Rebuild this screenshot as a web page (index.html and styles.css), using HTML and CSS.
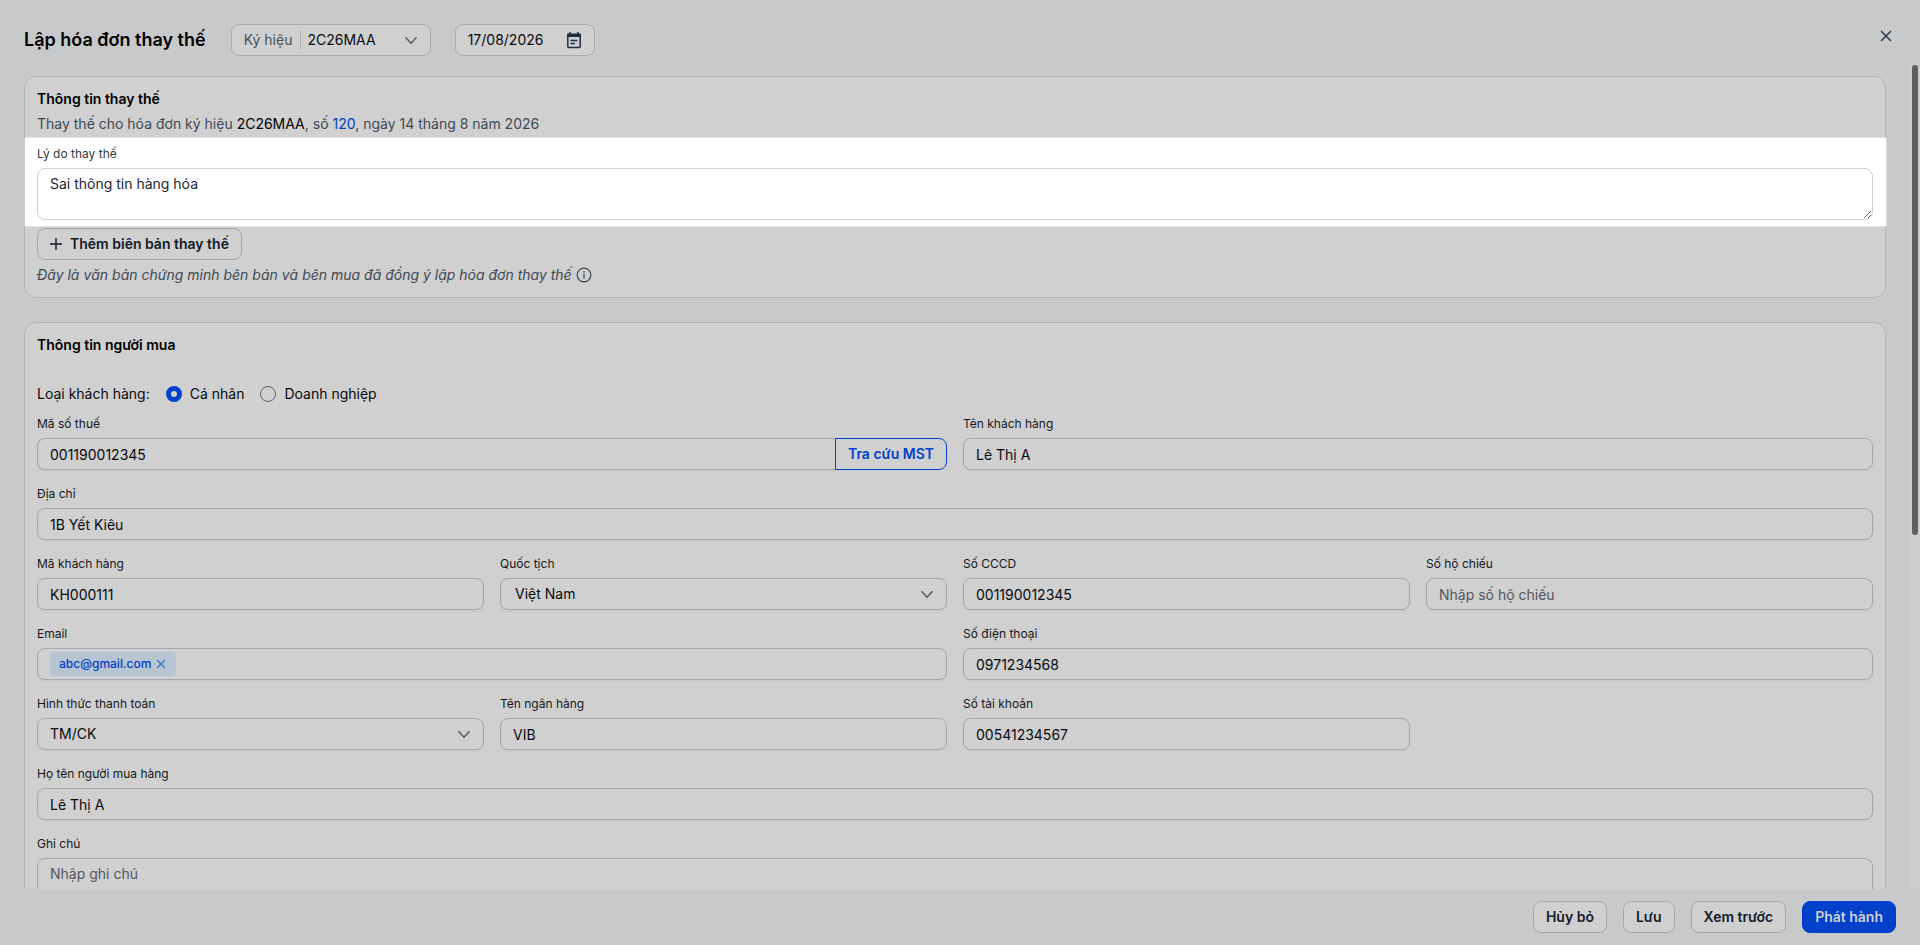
FILE: index.html
```html
<!DOCTYPE html>
<html lang="vi">
<head>
    <meta charset="UTF-8">
    <meta name="viewport" content="width=device-width, initial-scale=1.0">
    <title>Lập hóa đơn thay thế</title>
    <link rel="stylesheet" href="styles.css">
</head>
<body>
    <div class="modal">
        <header class="header">
            <h1>Lập hóa đơn thay thế</h1>
            <div class="symbol">
                <label for="symbol">Ký hiệu</label>
                <select id="symbol">
                    <option>2C26MAA</option>
                </select>
                <svg class="arrow" viewBox="0 0 14 14"><path d="M1.500 4.200l5.500 6 5.500-6"/></svg>
            </div>
            <div class="date">
                <input type="text" value="17/08/2026" aria-label="Ngày hóa đơn">
                <svg class="calendar" viewBox="0 0 16 18">
                    <path d="M1.800 4v11.400a1 1 0 0 0 1 1h10.400a1 1 0 0 0 1-1V4" stroke="currentColor" stroke-width="1.500"/>
                    <path d="M1 3.500a1 1 0 0 1 1-1h12a1 1 0 0 1 1 1V6H1zM3.200 1h1.600v2H3.200zM11.200 1h1.600v2h-1.600z" fill="currentColor"/>
                    <path d="M4.500 9.500h7M4.500 12.500h4.500" stroke="currentColor" stroke-width="1.500"/>
                </svg>
            </div>
            <button class="close" type="button" aria-label="Đóng">
                <svg viewBox="0 0 12 12"><path d="M1 1l10 10M11 1L1 11"/></svg>
            </button>
        </header>

        <div class="main">
            <div class="content">
                <section class="card card-replace">
                    <h2>Thông tin thay thế</h2>
                    <p class="desc">Thay thế cho hóa đơn ký hiệu <b>2C26MAA</b>, số <a href="#">120</a>, ngày 14 tháng 8 năm 2026</p>
                    <div class="reason">
                        <label for="reason">Lý do thay thế</label>
                        <textarea id="reason">Sai thông tin hàng hóa</textarea>
                    </div>
                    <button class="btn btn-add" type="button">
                        <svg viewBox="0 0 12 12"><path d="M6 0v12M0 6h12"/></svg>
                        Thêm biên bản thay thế
                    </button>
                    <p class="note">
                        Đây là văn bản chứng minh bên bán và bên mua đã đồng ý lập hóa đơn thay thế
                        <svg viewBox="0 0 14 14"><circle cx="7" cy="7" r="6"/><path d="M7 6v4M7 3.500v1.500"/></svg>
                    </p>
                </section>

                <section class="card card-buyer">
                    <h2>Thông tin người mua</h2>
                    <div class="type">
                        <span>Loại khách hàng:</span>
                        <label><input type="radio" name="type" checked>Cá nhân</label>
                        <label><input type="radio" name="type">Doanh nghiệp</label>
                    </div>
                    <div class="form">
                        <div class="field w-2">
                            <label for="tax">Mã số thuế</label>
                            <div class="group">
                                <input class="input" id="tax" type="text" value="001190012345">
                                <button class="btn btn-search" type="button">Tra cứu MST</button>
                            </div>
                        </div>
                        <div class="field w-2">
                            <label for="name">Tên khách hàng</label>
                            <input class="input" id="name" type="text" value="Lê Thị A">
                        </div>
                        <div class="field w-4">
                            <label for="address">Địa chỉ</label>
                            <input class="input" id="address" type="text" value="1B Yết Kiêu">
                        </div>
                        <div class="field">
                            <label for="code">Mã khách hàng</label>
                            <input class="input" id="code" type="text" value="KH000111">
                        </div>
                        <div class="field">
                            <label for="country">Quốc tịch</label>
                            <div class="select">
                                <select class="input country" id="country">
                                    <option>Việt Nam</option>
                                </select>
                                <svg class="arrow" viewBox="0 0 14 14"><path d="M1.500 4.200l5.500 6 5.500-6"/></svg>
                            </div>
                        </div>
                        <div class="field">
                            <label for="cccd">Số CCCD</label>
                            <input class="input" id="cccd" type="text" value="001190012345">
                        </div>
                        <div class="field">
                            <label for="passport">Số hộ chiếu</label>
                            <input class="input" id="passport" type="text" placeholder="Nhập số hộ chiếu">
                        </div>
                        <div class="field w-2">
                            <label for="email">Email</label>
                            <div class="input emails">
                                <span class="tag">abc@gmail.com
                                    <button type="button" aria-label="Xóa email">
                                        <svg viewBox="0 0 12 12"><path d="M2 2l8 8M10 2l-8 8"/></svg>
                                    </button>
                                </span>
                                <input id="email" type="email">
                            </div>
                        </div>
                        <div class="field w-2">
                            <label for="phone">Số điện thoại</label>
                            <input class="input" id="phone" type="text" value="0971234568">
                        </div>
                        <div class="field">
                            <label for="payment">Hình thức thanh toán</label>
                            <div class="select">
                                <select class="input" id="payment">
                                    <option>TM/CK</option>
                                </select>
                                <svg class="arrow" viewBox="0 0 14 14"><path d="M1.500 4.200l5.500 6 5.500-6"/></svg>
                            </div>
                        </div>
                        <div class="field">
                            <label for="bank">Tên ngân hàng</label>
                            <input class="input" id="bank" type="text" value="VIB">
                        </div>
                        <div class="field">
                            <label for="account">Số tài khoản</label>
                            <input class="input" id="account" type="text" value="00541234567">
                        </div>
                        <div class="field w-4">
                            <label for="buyer">Họ tên người mua hàng</label>
                            <input class="input" id="buyer" type="text" value="Lê Thị A">
                        </div>
                        <div class="field w-4">
                            <label for="memo">Ghi chú</label>
                            <textarea class="input memo" id="memo" placeholder="Nhập ghi chú"></textarea>
                        </div>
                    </div>
                </section>
            </div>
            <div class="scrollbar"><div class="thumb"></div></div>
        </div>

        <footer class="footer">
            <button class="btn" type="button">Hủy bỏ</button>
            <button class="btn" type="button">Lưu</button>
            <button class="btn" type="button">Xem trước</button>
            <button class="btn btn-primary" type="button">Phát hành</button>
        </footer>
    </div>
</body>
</html>
```
FILE: styles.css
```css
*{
    box-sizing: border-box;
}
body{
    margin: 0;
    font-family: Inter, sans-serif;
    font-size: 14px;
    line-height: 20px;
    color: #080a0e;
    background-color: #c8c9cb;
}
h1, h2, p{
    margin: 0;
}
button, input, select, textarea{
    font: inherit;
    color: inherit;
}
svg{
    display: block;
    flex: none;
    fill: none;
    stroke: currentColor;
}
.modal{
    height: 100vh;
    display: flex;
    flex-direction: column;
}

/* header */
.header{
    height: 65px;
    padding: 24px 24px 0;
    display: flex;
    align-items: flex-start;
}
h1{
    font-size: 18px;
    line-height: 32px;
    font-weight: 600;
    color: #000;
    margin-right: 25px;
}
.symbol, .date{
    height: 32px;
    display: flex;
    align-items: center;
    border: 1px solid #a9abb0;
    border-radius: 8px;
    background-color: #d0d0d0;
}
.symbol{
    width: 200px;
    position: relative;
    margin-right: 24px;
}
.symbol label{
    color: #475059;
    padding: 0 8px 0 12px;
    border-right: 1px solid #b0b2b6;
}
.symbol select{
    flex: 1;
    height: 30px;
    padding: 0 36px 0 6px;
    border: 0;
    background: none;
    appearance: none;
}
.arrow{
    width: 14px;
    height: 14px;
    color: #4b535e;
    stroke-width: 1.3;
    position: absolute;
    right: 13px;
    top: 9px;
    pointer-events: none;
}
.symbol .arrow{
    top: 8px;
    right: 12px;
}
.date{
    width: 140px;
    padding: 0 12px;
    justify-content: space-between;
}
.date input{
    width: 90px;
    padding: 0;
    border: 0;
    background: none;
}
.calendar{
    width: 16px;
    height: 18px;
    color: #1f2c3a;
    stroke: none;
}
.close{
    width: 24px;
    height: 24px;
    padding: 6px;
    margin-left: auto;
    margin-right: -2px;
    border: 0;
    background: none;
    color: #2c3845;
    stroke-width: 1.5;
}

/* content */
.main{
    flex: 1;
    min-height: 0;
    display: flex;
}
.content{
    flex: 1;
    overflow: hidden;
    padding: 11px 24px 0;
}
.scrollbar{
    width: 10px;
    padding: 0 2px;
    border-radius: 5px;
    background-color: #cecfcf;
}
.thumb{
    height: 57%;
    border-radius: 3px;
    background-color: #5f5f5f;
}
.card{
    border: 1px solid #b2b5b9;
    border-radius: 12px;
    background-color: #d0d0d0;
    padding: 12px;
    margin-bottom: 24px;
}
h2{
    font-size: 14px;
    line-height: 20px;
    font-weight: 600;
    color: #000;
}
.desc{
    margin-top: 4px;
    line-height: 22px;
    color: #3f4954;
}
.desc b{
    font-weight: 400;
    color: #000;
}
.desc a{
    color: #003fc5;
    text-decoration: none;
}
.reason{
    margin: 3px -13px 2px -12px;
    padding: 8px 13px 6px 12px;
    background-color: #fff;
    box-shadow: 0 0 2px #fff;
    position: relative;
}
.reason label{
    display: block;
    font-size: 12px;
    line-height: 16px;
    margin-bottom: 6px;
    color: #353a42;
}
.reason textarea{
    display: block;
    width: 100%;
    height: 52px;
    padding: 5px 12px;
    border: 1px solid #d0d2d7;
    border-radius: 8px;
    background-color: #fff;
    color: #23272f;
}
.btn{
    height: 32px;
    padding: 0 12px;
    border: 1px solid #a5a7ac;
    border-radius: 8px;
    background-color: #d0d0d0;
    font-weight: 600;
    color: #141a26;
}
.btn-add{
    display: flex;
    align-items: center;
    gap: 8px;
}
.btn-add svg{
    width: 12px;
    height: 12px;
    stroke-width: 1.4;
}
.note{
    display: flex;
    align-items: center;
    gap: 4px;
    margin-top: 5px;
    font-style: italic;
    color: #3f4954;
}
.note svg{
    width: 16px;
    height: 16px;
    stroke-width: 1.1;
}

/* buyer form */
.type{
    display: flex;
    align-items: center;
    margin-top: 28px;
    line-height: 22px;
}
.type label{
    display: flex;
    align-items: center;
    margin-left: 16px;
}
.type input{
    appearance: none;
    width: 16px;
    height: 16px;
    margin: 0 8px 0 0;
    border: 1px solid #596270;
    border-radius: 50%;
}
.type input:checked{
    border: 5px solid #0040cb;
}
.form{
    display: grid;
    grid-template-columns: repeat(4, 1fr);
    gap: 16px;
    margin-top: 11px;
}
.w-2{
    grid-column: span 2;
}
.w-4{
    grid-column: span 4;
}
.field{
    min-width: 0;
}
.field label{
    display: block;
    font-size: 12px;
    line-height: 16px;
    margin-bottom: 6px;
    color: #14171d;
}
.input{
    display: block;
    width: 100%;
    height: 32px;
    padding: 0 12px;
    border: 1px solid #a5a7ac;
    border-radius: 8px;
    background-color: #d0d0d0;
    box-shadow: 0 1px 2px #c4c4c5;
    appearance: none;
}
.input::placeholder{
    color: #53575e;
}
.group{
    display: flex;
}
.group .input{
    flex: 1;
    border-right: 0;
    border-radius: 8px 0 0 8px;
}
.btn-search{
    border-color: #0040cb;
    border-radius: 0 8px 8px 0;
    color: #0040cb;
}
.select{
    position: relative;
}
.country{
    padding-left: 14px;
}
.emails{
    display: flex;
    align-items: center;
}
.emails input{
    flex: 1;
    border: 0;
    background: none;
}
.tag{
    display: flex;
    align-items: center;
    gap: 4px;
    height: 24px;
    padding: 0 9px;
    border-radius: 4px;
    background-color: #b7c4d2;
    font-size: 12px;
    font-weight: 500;
    color: #003fc5;
}
.tag button{
    padding: 0;
    border: 0;
    background: none;
    color: #3975c4;
    stroke-width: 1.3;
}
.tag svg{
    width: 12px;
    height: 12px;
}
.memo{
    height: 80px;
    padding: 5px 12px;
}

/* footer */
.footer{
    height: 56px;
    padding: 0 24px;
    display: flex;
    align-items: center;
    justify-content: flex-end;
    gap: 16px;
}
.btn-primary{
    border-color: #0040cb;
    background-color: #0040cb;
    color: #d0d0d0;
}
```
